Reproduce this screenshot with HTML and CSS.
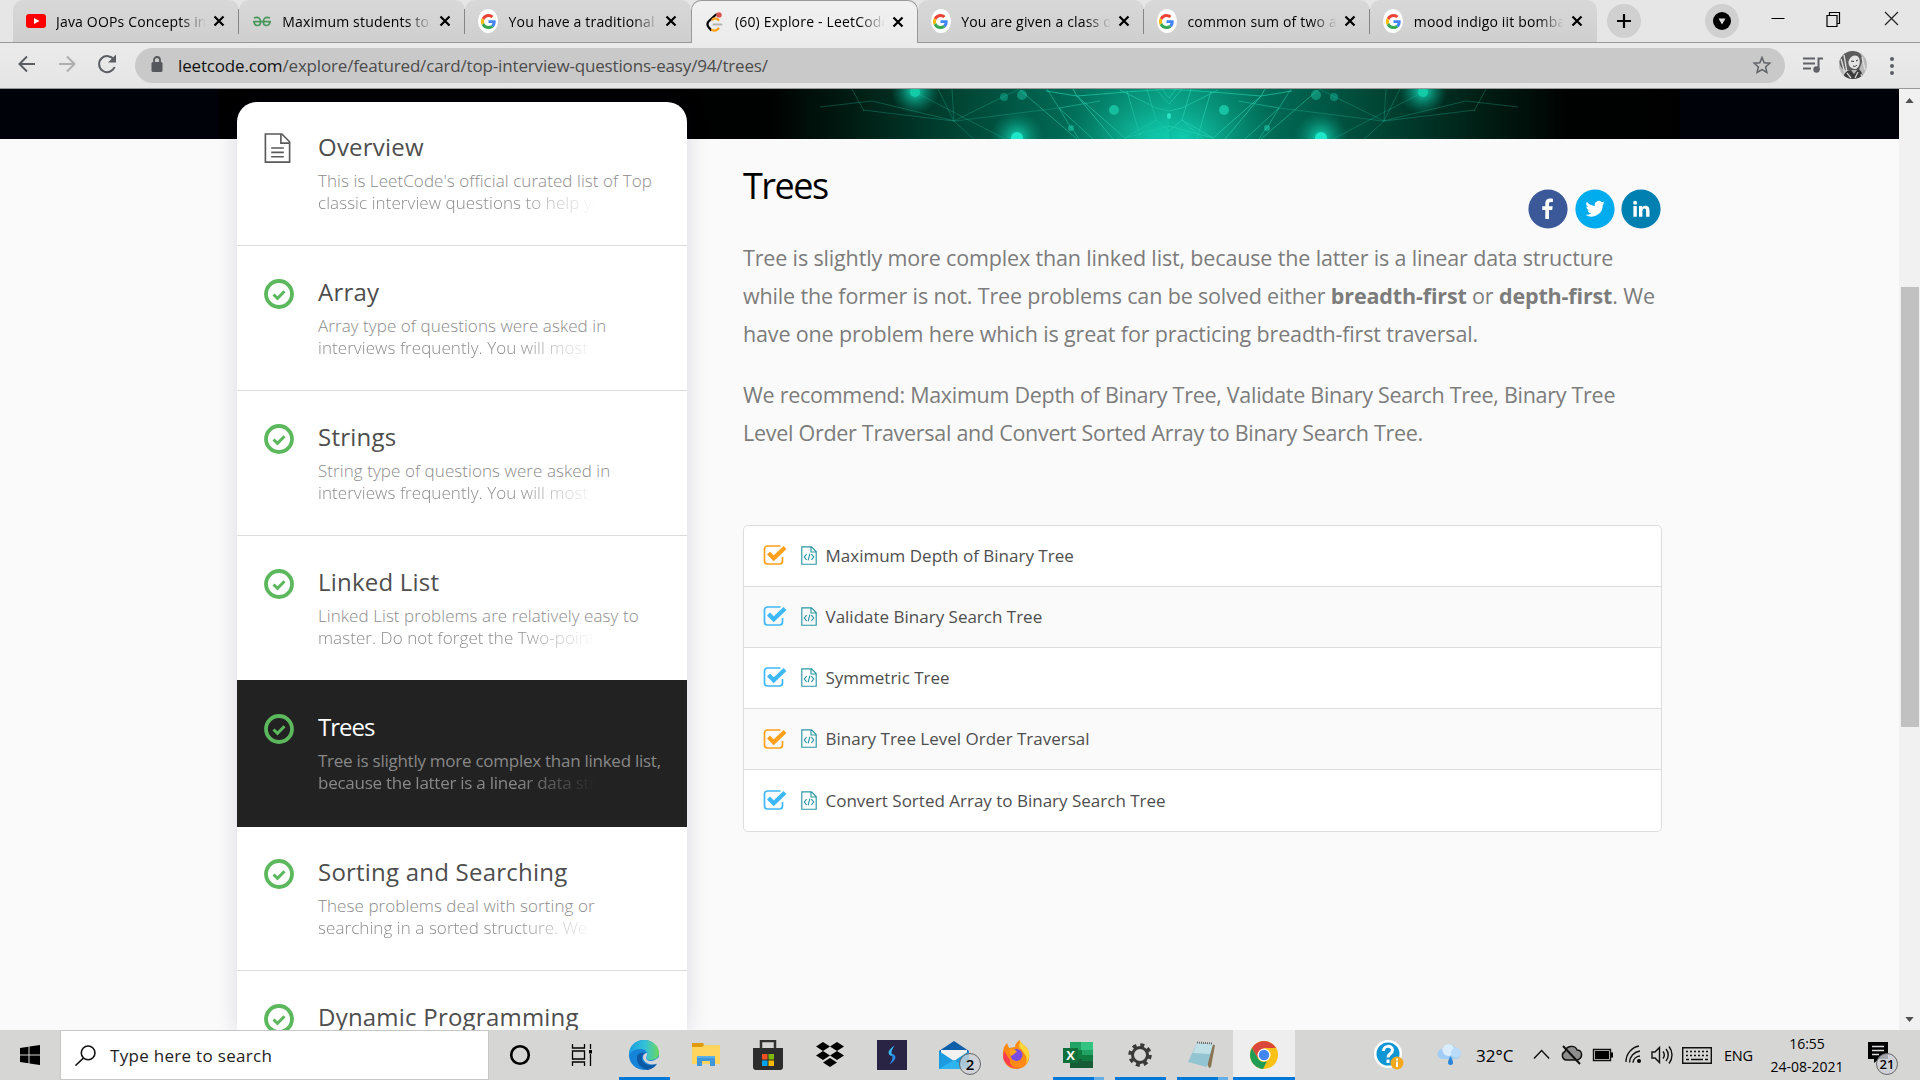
FILE: index.html
```html
<!DOCTYPE html>
<html lang="en">
<head>
<meta charset="utf-8">
<title>(60) Explore - LeetCode</title>
<link rel="stylesheet" href="styles.css">
</head>
<body>
<svg class="defs" width="0" height="0">
  <defs>
    <symbol id="google" viewBox="0 0 48 48"><path fill="#ea4335" d="M24 9.5c3.5 0 6.700 1.200 9.200 3.600l6.800-6.800C35.900 2.400 30.500 0 24 0 14.600 0 6.500 5.400 2.600 13.200l8 6.200C12.400 13.700 17.700 9.500 24 9.500z"/><path fill="#4285f4" d="M47 24.500c0-1.600-.2-3.100-.4-4.500H24v9h12.900c-.6 3-2.200 5.500-4.700 7.200l7.700 6C44.400 38 47 31.800 47 24.500z"/><path fill="#fbbc05" d="M10.500 28.600a14.500 14.500 0 0 1 0-9.200l-8-6.200a24 24 0 0 0 0 21.600z"/><path fill="#34a853" d="M24 48c6.500 0 11.900-2.100 15.900-5.800l-7.700-6c-2.200 1.500-4.900 2.300-8.200 2.300-6.300 0-11.600-4.200-13.500-9.900l-8 6.200C6.500 42.600 14.600 48 24 48z"/></symbol>
    <symbol id="x" viewBox="0 0 12 12"><path d="M1.500 1.500l9 9M10.500 1.500l-9 9" stroke="#000" stroke-width="2.200"/></symbol>
    <symbol id="done" viewBox="0 0 30 30"><circle cx="15" cy="15" r="13" fill="none" stroke="#5cb85c" stroke-width="3.800"/><path d="M9.500 15.500l4 3.800 7-7" fill="none" stroke="#5cb85c" stroke-width="3"/></symbol>
    <symbol id="tick" viewBox="0 0 24 22"><path d="M17.500 2H4.500A3 3 0 0 0 1.500 5v12a3 3 0 0 0 3 3h12a3 3 0 0 0 3-3v-4" fill="none" stroke="currentColor" stroke-width="1.700"/><path d="M5.500 9l5.200 5.200L22 3.400" fill="none" stroke="currentColor" stroke-width="4.200"/></symbol>
    <symbol id="code" viewBox="0 0 16 19"><path d="M.8 .8h9.700l4.700 4.700v12.700H.8zM10 .8V6h5.200M5.600 8.200L3.300 11l2.300 2.800M10.400 8.200l2.300 2.800-2.300 2.800M8.900 7.700l-1.800 6.600" fill="none" stroke="#2a98a4" stroke-width="1.150"/></symbol>
  </defs>
</svg>

<header class="browser">
  <div class="tabs">
    <div class="tab"><svg class="fav" viewBox="0 0 20 20"><rect y="3" width="20" height="14" rx="3" fill="#f00"/><path d="M8 7l5.500 3L8 13z" fill="#fff"/></svg><span class="tt">Java OOPs Concepts in Java</span><svg class="cl"><use href="#x"/></svg></div>
    <div class="tab"><svg class="fav" viewBox="0 0 20 20"><g fill="none" stroke="#2f8d46" stroke-width="1.700" opacity=".85"><path d="M2 7c5-2 7 1 6.500 5-.5 3.500-6 3.500-6.500-1M18 7c-5-2-7 1-6.500 5 .5 3.500 6 3.500 6.500-1M1 10.700h18"/></g></svg><span class="tt">Maximum students to pass</span><svg class="cl"><use href="#x"/></svg></div>
    <div class="tab last-inactive"><span class="fav g"><svg><use href="#google"/></svg></span><span class="tt">You have a traditional car</span><svg class="cl"><use href="#x"/></svg></div>
    <div class="tab active"><svg class="fav" viewBox="0 0 20 20"><g fill="none" stroke-linecap="round"><path d="M12 2.500L5 9c-2 2-2 4-.5 6l2.500 3" stroke="#000" stroke-width="2.200"/><path d="M8.500 7.500c2-1.500 4-1.500 6 .5M8 18c2.500 1.200 4.500.8 6.500-1.500" stroke="#ffa116" stroke-width="2.200"/><path d="M9.500 12.500h8" stroke="#b3b3b3" stroke-width="2"/></g><circle cx="15" cy="2.900" r="2.700" fill="#d9504c"/></svg><span class="tt">(60) Explore - LeetCode</span><svg class="cl"><use href="#x"/></svg></div>
    <div class="tab"><span class="fav g"><svg><use href="#google"/></svg></span><span class="tt">You are given a class of N</span><svg class="cl"><use href="#x"/></svg></div>
    <div class="tab"><span class="fav g"><svg><use href="#google"/></svg></span><span class="tt">common sum of two arrays</span><svg class="cl"><use href="#x"/></svg></div>
    <div class="tab end"><span class="fav g"><svg><use href="#google"/></svg></span><span class="tt">mood indigo iit bombay</span><svg class="cl"><use href="#x"/></svg></div>
    <svg class="plus" viewBox="0 0 34 34"><circle cx="17" cy="17" r="17" fill="#d0d0d0"/><path d="M17 10v14M10 17h14" stroke="#000" stroke-width="2.200"/></svg>
    <span class="grow"></span>
    <svg class="drop" viewBox="0 0 34 34"><circle cx="17" cy="17" r="17" fill="#d0d0d0"/><circle cx="17" cy="17" r="9" fill="#000"/><path d="M13.500 14.500h7L17 20.500z" fill="#ddd"/></svg>
    <svg class="win" viewBox="0 0 140 20"><path d="M0.500 10.500h13" stroke="#000"/><path d="M57 7.500h9v11h-10v-11zM58.500 7V4.500h10v11H66" fill="none" stroke="#000" stroke-width="1.200"/><path d="M114 4l13 13M127 4l-13 13" stroke="#222" stroke-width="1.200"/></svg>
  </div>
  <div class="bar">
    <svg class="nav" viewBox="0 0 110 30"><g fill="none" stroke="#5a5e63" stroke-width="2"><path d="M17 15H2M9 7.500L1.500 15 9 22.500"/><path d="M41 15h15M49 7.500l7.500 7.500-7.500 7.500" stroke="#aeaeae"/><path d="M96 11a8 8 0 1 0 .6 7"/></g><path d="M98 5.500v8h-8z" fill="#5a5e63"/></svg>
    <div class="omni">
      <svg class="lock" viewBox="0 0 12 18"><path d="M3 8V5a3 3 0 0 1 6 0v3" fill="none" stroke="#54575c" stroke-width="1.800"/><rect x=".5" y="7" width="11" height="10" rx="1.500" fill="#54575c"/></svg>
      <span class="url"><b>leetcode.com</b>/explore/featured/card/top-interview-questions-easy/94/trees/</span>
      <svg class="star" viewBox="0 0 20 20"><path d="M10 2.500l2.200 5.200 5.600.5-4.200 3.700 1.300 5.500-4.900-2.900-4.900 2.900 1.300-5.500L2.200 8.200l5.600-.5z" fill="none" stroke="#5f6368" stroke-width="1.500"/></svg>
    </div>
    <svg class="music" viewBox="0 0 20 18"><path d="M0 2.500h12M0 7.500h12M0 12.500h8M15.500 14V2.500H20" fill="none" stroke="#5f6368" stroke-width="2"/><circle cx="13.500" cy="13.500" r="3.200" fill="#5f6368"/></svg>
    <svg class="avatar" viewBox="0 0 28 28"><defs><clipPath id="round"><circle cx="14" cy="14" r="14"/></clipPath></defs><g clip-path="url(#round)"><path d="M0 0h28v28H0z" fill="#b9b9b9"/><path d="M0 6c3-5 8-7 14-6 7 0 10 5 9 11l-3 8H5C1 16 0 11 0 6z" fill="#5c5c5c"/><path d="M10 9c2-5 8-6 10-2s0 11-4 11-8-4-6-9z" fill="#e4e4e4"/><path d="M2 8l4 14M5 4l3 18M23 6l3 13" stroke="#ddd" stroke-width="1.400"/><path d="M12 10l3 .5M17 10l2-1M14 15c2 1 3 0 4-1" stroke="#333" fill="none"/><path d="M4 28c1-6 4-9 8-9l3 4 4-5c4 2 5 6 5 10z" fill="#3d3d3d"/><path d="M8 22l4 5M19 21l-3 6M22 23l1 4" stroke="#d5d5d5" stroke-width="1.300"/></g></svg>
    <svg class="dots" viewBox="0 0 6 20"><circle cx="3" cy="3" r="2" fill="#5a5e63"/><circle cx="3" cy="10" r="2" fill="#5a5e63"/><circle cx="3" cy="17" r="2" fill="#5a5e63"/></svg>
  </div>
</header>

<div class="view">
  <div class="page">
    <svg class="banner" viewBox="0 0 1899 50" preserveAspectRatio="none">
      <defs>
        <linearGradient id="bg"><stop offset="0" stop-color="#000"/><stop offset=".22" stop-color="#000201"/><stop offset=".38" stop-color="#001d13"/><stop offset=".6" stop-color="#004736"/><stop offset=".8" stop-color="#006a55"/><stop offset="1" stop-color="#08a489"/></linearGradient>
        <radialGradient id="glow"><stop offset="0" stop-color="#12d8ba"/><stop offset=".25" stop-color="#10c5a8" stop-opacity=".75"/><stop offset="1" stop-color="#0a8a70" stop-opacity="0"/></radialGradient>
        <g id="half">
          <rect x="660" width="509" height="50" fill="url(#bg)"/>
          <ellipse cx="1155" cy="48" rx="95" ry="56" fill="url(#glow)" opacity=".8"/>
          <circle cx="915" cy="2" r="24" fill="url(#glow)"/><circle cx="1017" cy="49" r="27" fill="url(#glow)"/>
          <circle cx="915" cy="3" r="5" fill="#14cba8"/><circle cx="1017" cy="49" r="6" fill="#1ee6c8"/>
          <g fill="#12a488"><circle cx="1004" cy="8" r="4" opacity=".6"/><circle cx="1022" cy="6" r="5" opacity=".7"/><circle cx="1114" cy="21" r="5" fill="#17c3a2"/><circle cx="1071" cy="39" r="3"/></g>
          <g fill="none" stroke="#23cfae" stroke-width="1"><path d="M820 18l52-6 83 20 104-13M863 21l91 11M954 32l-2-32M954 32L938 0M954 32l65-32M954 32l24 22M852 0l12 22M915 3l90 47" opacity=".27"/><path d="M1020 1l57 49M1047 0l12 19 34 31M1059 19l41-7M1071 38l8 12M1059 19l12 20" opacity=".5"/><path d="M1046 2l31 5 49-4 43-3M1077 7L1073 0M1077 7l48 42M1077 7l36 43M1125 49l31-18 13 11M1127 2l14 48M1147 0l9 31M1120 1l36 18 13 3M1156 0l13 15M1162 0l7 9M1125 49l44-12M1135 50l21-19" opacity=".68"/></g>
        </g>
      </defs>
      <rect width="1899" height="50" fill="#000209"/><rect x="219" width="1461" height="50" fill="#000"/>
      <use href="#half"/><use href="#half" transform="translate(2338 0) scale(-1 1)"/><ellipse cx="1169" cy="27" rx="2" ry="3" fill="#2ce0c2"/>
    </svg>
    <div class="cols">
      <aside class="side">
        <div class="item first"><svg class="doc" viewBox="0 0 27 32"><path d="M1 1h17l8 8v21H1zM17 1v9.500h9M7 15.500h13M7 20h13M7 24.500h13" fill="none" stroke="#5a5a5a" stroke-width="1.700"/></svg><div><h3>Overview</h3><p>This is LeetCode's official curated list of Top</p><p class="fade">classic interview questions to help you</p></div></div>
        <div class="item"><svg class="ok"><use href="#done"/></svg><div><h3>Array</h3><p>Array type of questions were asked in</p><p class="fade">interviews frequently. You will most likely</p></div></div>
        <div class="item"><svg class="ok"><use href="#done"/></svg><div><h3>Strings</h3><p>String type of questions were asked in</p><p class="fade">interviews frequently. You will most likely</p></div></div>
        <div class="item"><svg class="ok"><use href="#done"/></svg><div><h3>Linked List</h3><p>Linked List problems are relatively easy to</p><p class="fade">master. Do not forget the Two-pointer</p></div></div>
        <div class="item current"><svg class="ok"><use href="#done"/></svg><div><h3>Trees</h3><p>Tree is slightly more complex than linked list,</p><p class="fade">because the latter is a linear data structure</p></div></div>
        <div class="item"><svg class="ok"><use href="#done"/></svg><div><h3>Sorting and Searching</h3><p>These problems deal with sorting or</p><p class="fade">searching in a sorted structure. We</p></div></div>
        <div class="item"><svg class="ok"><use href="#done"/></svg><div><h3>Dynamic Programming</h3></div></div>
      </aside>
      <main class="main">
        <div class="head">
          <h1>Trees</h1>
          <div class="social">
            <svg viewBox="0 0 40 40"><circle cx="20" cy="20" r="19.600" fill="#3b5998"/><path d="M17.300 30V21h-3v-3.700h3v-2.800c0-3.300 1.800-5 4.800-5 1.300 0 2.400.1 2.800.2v3.400h-2c-1.500 0-1.900.8-1.900 1.900v2.300h3.700l-.5 3.700h-3.200v9z" fill="#fff"/></svg>
            <svg viewBox="0 0 40 40"><circle cx="20" cy="20" r="19.600" fill="#00aced"/><path d="M29.600 13.900c-.7.300-1.500.5-2.200.6.800-.5 1.400-1.200 1.700-2.100-.8.400-1.600.8-2.500.9a3.900 3.900 0 0 0-6.700 3.600 11 11 0 0 1-8-4.100 3.900 3.900 0 0 0 1.200 5.200c-.6 0-1.200-.2-1.800-.5 0 1.900 1.300 3.500 3.100 3.900-.6.200-1.200.2-1.800.1.500 1.500 1.900 2.700 3.700 2.700a7.900 7.900 0 0 1-5.800 1.600 11.200 11.200 0 0 0 17.200-9.900c.8-.6 1.400-1.200 1.900-2z" fill="#fff"/></svg>
            <svg viewBox="0 0 40 40"><circle cx="20" cy="20" r="19.600" fill="#007fb1"/><path d="M12.400 17h3.400v10.700h-3.400zM14.100 11.700a2 2 0 1 1 0 4 2 2 0 0 1 0-4zM18 17h3.200v1.500c.5-.9 1.600-1.800 3.200-1.800 3.500 0 4.100 2.300 4.100 5.200v5.800h-3.400v-5.200c0-1.300 0-2.900-1.700-2.900s-2 1.400-2 2.800v5.300H18z" fill="#fff"/></svg>
          </div>
        </div>
        <p class="para">Tree is slightly more complex than linked list, because the latter is a linear data structure<br>while the former is not. Tree problems can be solved either <b>breadth-first</b> or <b>depth-first</b>. We<br>have one problem here which is great for practicing breadth-first traversal.</p>
        <p class="para tight">We recommend: Maximum Depth of Binary Tree, Validate Binary Search Tree, Binary Tree<br>Level Order Traversal and Convert Sorted Array to Binary Search Tree.</p>
        <ul class="list">
          <li><svg class="tick o"><use href="#tick"/></svg><svg class="code"><use href="#code"/></svg><span>Maximum Depth of Binary Tree</span></li>
          <li><svg class="tick"><use href="#tick"/></svg><svg class="code"><use href="#code"/></svg><span>Validate Binary Search Tree</span></li>
          <li><svg class="tick"><use href="#tick"/></svg><svg class="code"><use href="#code"/></svg><span>Symmetric Tree</span></li>
          <li><svg class="tick o"><use href="#tick"/></svg><svg class="code"><use href="#code"/></svg><span>Binary Tree Level Order Traversal</span></li>
          <li><svg class="tick"><use href="#tick"/></svg><svg class="code"><use href="#code"/></svg><span>Convert Sorted Array to Binary Search Tree</span></li>
        </ul>
      </main>
    </div>
  </div>
  <div class="scroll"><svg viewBox="0 0 10 6"><path d="M0 6l5-6 5 6z" fill="#505050"/></svg><span class="thumb"></span><svg viewBox="0 0 10 6"><path d="M0 0l5 6 5-6z" fill="#505050"/></svg></div>
</div>

<footer class="task">
  <svg class="start" viewBox="0 0 20 20"><path d="M0 3l8.500-1.200v7.700H0zM9.500 1.600L20 0v9.500H9.500zM0 10.500h8.500v7.700L0 17zM9.500 10.500H20V20L9.500 18.400z"/></svg>
  <div class="find"><svg viewBox="0 0 20 20"><circle cx="12.500" cy="7.500" r="6.500" fill="none" stroke="#111" stroke-width="1.500"/><path d="M8 12.500L.5 19.500" stroke="#111" stroke-width="1.500"/></svg><span>Type here to search</span></div>
  <div class="apps">
    <span class="app"><svg viewBox="0 0 30 30"><circle cx="15" cy="15" r="8.800" fill="none" stroke="#000" stroke-width="2.600"/></svg></span>
    <span class="app"><svg viewBox="0 0 30 30"><path d="M5.500 4v4h12V4M5.500 26v-4h12v4M5.500 11h12v8h-12zM23.500 4v5M23.500 14v12" fill="none" stroke="#000" stroke-width="1.300"/><path d="M22 10h3v3.500h-3z"/></svg></span>
    <span class="app on"><svg viewBox="0 0 30 30"><defs><linearGradient id="e1" x1="0" x2="1"><stop offset="0" stop-color="#1a9fe0"/><stop offset=".55" stop-color="#35c1d8"/><stop offset="1" stop-color="#6ad95a"/></linearGradient></defs><circle cx="15" cy="15" r="15" fill="#1583d8"/><path d="M0 13C1 5 7 0 15 0c9 0 15 6 15 13 0 5-4 7-8 7-5 0-5-2-4-4 1-3-1-7-6-7-6 0-11 3-12 7z" fill="url(#e1)"/><path d="M8 17c-1 7 5 12 11 13 4-1 7-3 9-6-8 3-16 0-15-7 0-2 2-4 4-4-5-1-9 1-9 4z" fill="#0c59a4"/><path d="M18 13c1 3-3 5 1 7.500 3 1 7 .5 11-3.500v7l-2-.5c-5 2-10 1-13-3-2-3-1-7 3-7.500z" fill="#d6d6d6"/></svg></span>
    <span class="app"><svg viewBox="0 0 30 30"><path d="M1 3h11l2 3v5H1z" fill="#e09a10"/><path d="M1 7h10l2-2h16v19H1z" fill="#ffd45f"/><path d="M6 26V16h18v10h-5v-5h-8v5z" fill="#3f96d8"/><path d="M6 16h18v2H6z" fill="#5bb0e8"/></svg></span>
    <span class="app"><svg viewBox="0 0 30 30"><path d="M8 9V1h14v8" fill="none" stroke="#333" stroke-width="2.500"/><path d="M0 8h30v19a3 3 0 0 1-3 3H3a3 3 0 0 1-3-3z" fill="#2d2d2d"/><path d="M9 14h5.500v5.500H9z" fill="#f25022"/><path d="M15.500 14H21v5.500h-5.500z" fill="#7fba00"/><path d="M9 20.500h5.500V26H9z" fill="#00a4ef"/><path d="M15.500 20.500H21V26h-5.500z" fill="#ffb900"/></svg></span>
    <span class="app"><svg viewBox="0 0 30 30"><path d="M8 2l7 4.500L8 11 1 6.500zM22 2l7 4.500-7 4.500-7-4.500zM8 11l7 4.500L8 20l-7-4.500zM22 11l7 4.500-7 4.500-7-4.500zM15 18l7 4.500-7 4.500-7-4.500z"/></svg></span>
    <span class="app"><svg viewBox="0 0 30 30"><path d="M0 0h30v30H0z" fill="#292443"/><path d="M17.500 5.500c-6 4-8 8-3.500 10.500l2-1c-3-2-1-5 1.500-9.500z" fill="#36b5f0"/><path d="M12.500 24.500c6-4 8-8 3.500-10.500l-2 1c3 2 1 5-1.500 9.500z" fill="#2b8be8"/></svg></span>
    <span class="app"><svg viewBox="0 0 30 30"><path d="M0 11L15 1l15 10v4H0z" fill="#0f5ea8"/><path d="M2 10h26v10H2z" fill="#f2f2f2"/><path d="M0 11l15 10 15-10v18H0z" fill="#1d9be0"/><path d="M0 29l15-9 15 9z" fill="#30b4f0"/></svg><i class="badge">2</i></span>
    <span class="app"><svg viewBox="0 0 30 30"><path d="M2 12C2 8 4 5 6 3l2 5 6-1c0-3 2-5 5-7 0 4 6 5 8 10 4 10-2 19-12 19C7 29 1 22 2 12z" fill="#ff8a16"/><path d="M17 4c1 5 8 6 8 12M19 0c0 4 7 5 9 12 1 5-1 10-3 12 2-7-1-14-7-16z" fill="#ffd53a"/><path d="M2 17c2 9 10 12 17 11-8 0-11-4-10-8L3 11z" fill="#ff3b50"/><circle cx="15.500" cy="15" r="6" fill="#7a4be0"/><path d="M8 10c3-2 6-1 8 2-3 1-3 3-6 4z" fill="#ffa51c"/></svg></span>
    <span class="app on more"><svg viewBox="0 0 30 30"><path d="M7 2h23v26H7z" fill="#21a366"/><path d="M18 2h12v8H18z" fill="#33c481"/><path d="M7 10h12v9H7z" fill="#107c41"/><path d="M7 19h23v9H7z" fill="#185c37"/><path d="M19 15h11v6H19z" fill="#107c41"/><path d="M0 8h15v15H0z" fill="#0f703b"/></svg><i class="xl">X</i></span>
    <span class="app on"><svg viewBox="0 0 30 30"><circle cx="15" cy="15" r="7.500" fill="none" stroke="#3a3a3a" stroke-width="3"/><circle cx="15" cy="15" r="10" fill="none" stroke="#3a3a3a" stroke-width="3.500" stroke-dasharray="4 3.850"/></svg></span>
    <span class="app on more"><svg viewBox="0 0 30 30"><path d="M11 3l17 2-4 22-2 1z" fill="#8a7550"/><path d="M10 3l16 1-6 23-19-5z" fill="#93c4d2"/><path d="M10 3l16 1-3 10-17-1z" fill="#bfe0e6"/><path d="M10 2.500l16 1" stroke="#666" stroke-width="2" stroke-dasharray="1 1"/></svg></span>
    <span class="app on focus"><svg viewBox="0 0 30 30"><circle cx="15" cy="15" r="14" fill="#fbc116"/><path d="M2.900 8A14 14 0 0 1 27.100 8H15l-6 10.500z" fill="#d9483b"/><path d="M2.900 8l6 10.500c2 3.500 6 4 9 3L14 29A14 14 0 0 1 2.900 8z" fill="#1f9d55"/><circle cx="15" cy="15" r="6.500" fill="#fff"/><circle cx="15" cy="15" r="5.200" fill="#4285f4"/></svg></span>
  </div>
  <span class="grow"></span>
  <div class="tray">
    <svg class="help" viewBox="0 0 30 32"><circle cx="14" cy="15" r="14" fill="#fff"/><circle cx="14" cy="15" r="11.500" fill="#0f96d4"/><path d="M9.500 12c0-6 9-6 9-1 0 4-4.500 3.500-4.500 7.500M14 20.500v3.500" fill="none" stroke="#fff" stroke-width="3"/><circle cx="23" cy="24" r="6.500" fill="#f5a81c"/><path d="M23 22.500V28M23 19.500v2" stroke="#fff" stroke-width="2"/></svg>
    <svg class="cloud" viewBox="0 0 26 24"><path d="M5.500 16a5 5 0 0 1 0-10A7 7 0 0 1 18 4.500a6 6 0 0 1 2 11.500z" fill="#9fcdf6"/><circle cx="11.500" cy="7" r="6" fill="#d9edfd"/><circle cx="19" cy="10" r="5" fill="#b9dcfa"/><path d="M13.500 13c1.500 3 2.500 4.500 2.500 6.500a2.500 2.500 0 0 1-5 0c0-2 1-3.500 2.500-6.500z" fill="#2b86d9"/></svg>
    <span class="temp">32°C</span>
    <svg class="ico" viewBox="1530 0 190 30"><g fill="none" stroke="#111" stroke-width="1.400"><path d="M1534 18.500l7.600-8 7.600 8"/><path d="M1566 20a4.500 4.500 0 0 1-1-8.500c1-6 10-7 12-1.500 5 0 6 6 2.500 9l-2 1z" fill="#8e8e8e"/><path d="M1563 6l17 18" stroke-width="2"/><path d="M1593.500 9.500h17v11h-17z"/><path d="M1626 22a16 16 0 0 1 13-16M1629.500 22.500a12 12 0 0 1 10.500-11.500M1633 22.700a7.500 7.500 0 0 1 7-6.700"/><path d="M1652 12h3l4.500-4.500v15L1655 18h-3zM1663 11.500c1.500 2 1.500 5 0 7M1666 9c3 3.500 3 8.500 0 12M1669 6.500c4 5 4 12 0 17"/><path d="M1682.700 7.700h28.600v15.600h-28.600z"/><path d="M1686 11.500h22M1686 15.500h22" stroke-dasharray="2 2"/><path d="M1686 19.500h3M1691 19.500h12M1705 19.500h3"/></g><path d="M1595 11h14v8h-14zM1611 12.500h2v5h-2z"/><circle cx="1639" cy="21" r="2"/></svg>
    <span class="eng">ENG</span>
    <span class="clock"><span>16:55</span><span>24-08-2021</span></span>
    <span class="note"><svg viewBox="0 0 20 22"><path d="M0 0h20v17h-9l-5 4v-4H0z"/><path d="M4 4.500h12M4 8.500h12M4 12.500h7" stroke="#ddd" stroke-width="1.500"/></svg><i class="badge">21</i></span>
  </div>
</footer>
</body>
</html>
```
FILE: styles.css
```css
* { box-sizing: border-box; margin: 0; padding: 0; }
body { width: 1920px; height: 1080px; overflow: hidden; display: flex; flex-direction: column; font-family: "Open Sans", "Noto Sans", sans-serif; background: #fafafa; color: #000; }
svg { display: block; flex: none; }
i { font-style: normal; }
.defs { position: absolute; }
.grow { flex: 1; }

/* browser frame */
.browser { height: 89px; flex: none; background: #e6e6e6; }
.tabs { display: flex; height: 43px; padding-left: 12.500px; border-bottom: 1px solid #999; }
.tab { width: 226.300px; height: 42px; padding: 0 14px 0 13px; display: flex; align-items: center; border-radius: 10px 10px 0 0; background: linear-gradient(#d8d8d8, #cfcfcf); position: relative; flex: none; }
.tab::after { content: ""; position: absolute; right: 0; top: 9px; width: 1px; height: 25px; background: #858585; }
.tab.active { background: linear-gradient(#f1f1f1, #ebebeb); border: 1px solid #999; border-bottom: 0; height: 43px; padding: 0 13px 1px 12px; }
.tab.active::after, .last-inactive::after, .tab.end::after { display: none; }
.fav { width: 20px; height: 20px; flex: none; }
.fav.g { width: 20px; height: 24px; border-radius: 50%; background: #fff; display: flex; align-items: center; justify-content: center; }
.fav.g svg { width: 15px; height: 17px; }
.tt { flex: 1; margin-left: 10.500px; margin-right: 8px; overflow: hidden; white-space: nowrap; font-size: 14px; letter-spacing: .18px; -webkit-mask-image: linear-gradient(90deg, #000 124px, transparent 150px); mask-image: linear-gradient(90deg, #000 124px, transparent 150px); }
.url b { font-weight: 400; }
.cl { width: 12px; height: 12px; }
.plus { width: 34px; height: 34px; margin: 4px 0 0 10px; }
.drop { width: 34px; height: 34px; margin: 4px 32px 0 0; }
.win { width: 140px; height: 20px; margin: 8px 9px 0 0; }
.bar { height: 46px; display: flex; align-items: center; background: linear-gradient(#ebebeb, #e5e5e5); border-bottom: 1px solid #999; padding-right: 24px; }
.nav { width: 110px; height: 30px; margin: -3px 7px 0 18px; }
.omni { width: 1650px; height: 35px; margin-top: -1px; border-radius: 18px; background: #c9c9c9; display: flex; align-items: center; padding: 0 13px 0 16px; }
.lock { width: 12px; height: 18px; margin-top: -2px; }
.url { flex: 1; padding-left: 15px; font-size: 17px; letter-spacing: -.16px; color: #4c4c4c; }
.url b { color: #111; }
.star { width: 20px; height: 20px; }
.music { width: 20px; height: 18px; margin: -2px 0 0 18px; }
.avatar { width: 28px; height: 28px; margin: -1px 0 0 16px; }
.dots { width: 6px; height: 20px; margin-left: 22px; }

/* page */
.view { height: 941px; flex: none; display: flex; overflow: hidden; }
.page { width: 1899px; }
.banner { width: 1899px; height: 50px; }
.cols { display: flex; margin-top: -37px; position: relative; padding-left: 237px; }
.side { width: 450px; background: #fff; border-radius: 20px 20px 0 0; box-shadow: 0 0 22px rgba(30, 30, 90, .14); height: 930px; }
.item { height: 145px; border-bottom: 1px solid #dcdcdc; display: flex; padding: 33px 0 0 26.500px; }
.item.first { height: 144px; padding-top: 32px; }
.ok { width: 30px; height: 30px; margin-right: 24.500px; }
.doc { width: 27px; height: 31px; margin: -1px 27px 0 .5px; }
.item h3 { font-size: 24px; font-weight: 400; line-height: 30px; letter-spacing: .22px; color: #4e4e4e; margin: -2px 0 8px; white-space: nowrap; }
.item p { font-size: 17px; line-height: 22px; font-weight: 300; letter-spacing: .07px; color: #8c8c8c; white-space: nowrap; width: 350px; }
.item .fade { -webkit-mask-image: linear-gradient(90deg, #000 200px, transparent 278px); mask-image: linear-gradient(90deg, #000 200px, transparent 278px); }
.item.current { background: #222; border-color: #222; box-shadow: 0 -1px #222, 0 1px #222; }
.item.current h3 { color: #fff; font-weight: 500; letter-spacing: -1px; }
.item.current p { font-weight: 400; letter-spacing: -.26px; color: #888; }
.main { width: 919px; margin-left: 56px; padding-top: 52px; }
.head { height: 85px; display: flex; justify-content: space-between; padding-right: 1px; }
h1 { font-size: 36px; font-weight: 500; letter-spacing: -1.500px; line-height: 64px; }
.social { display: flex; gap: 6.500px; padding-top: 35px; }
.social svg { width: 40px; height: 40px; }
.para { font-size: 21.500px; line-height: 38px; letter-spacing: -.15px; color: #7c7c7c; margin-bottom: 23px; white-space: nowrap; }
.para.tight { letter-spacing: -.28px; }
.list { list-style: none; width: 919px; border: 1px solid #ddd; border-radius: 5px; background: #fff; margin-top: 72.500px; overflow: hidden; }
.list li { height: 61.200px; border-bottom: 1px solid #ddd; display: flex; align-items: center; padding: 0 0 1px 19px; font-size: 17px; color: #4e4e4e; }
.list li:last-child { border-bottom: 0; }
.list li:nth-child(even) { background: #fafafa; }
.tick { width: 24px; height: 22px; color: #3db8f9; }
.tick.o { color: #ffa01c; }
.code { width: 16px; height: 19px; margin: 0 8.500px 0 14px; }
.scroll { width: 21px; background: #f1f1f1; display: flex; flex-direction: column; align-items: center; justify-content: space-between; padding: 9px 0 8px; }
.scroll svg { width: 9px; height: 5px; }
.thumb { width: 18px; height: 440px; background: #c1c1c1; margin-top: -107px; }

/* taskbar */
.task { height: 50px; flex: none; background: #d6d6d5; display: flex; align-items: center; padding-left: 20px; }
.start { width: 20px; height: 24px; }
.find { margin-left: 20px; width: 429px; height: 50px; background: #fff; border: 1px solid #c6c6c6; display: flex; align-items: center; padding-left: 14px; font-size: 17px; letter-spacing: .3px; color: #222; }
.find svg { width: 21px; height: 21px; margin-right: 14px; }
.apps { display: flex; height: 50px; }
.app { width: 62px; display: flex; align-items: center; justify-content: center; position: relative; }
.app svg { width: 30px; height: 30px; }
.on::after { content: ""; position: absolute; left: 6px; right: 5px; bottom: 0; height: 3px; background: #0078d7; }
.more::after { background: linear-gradient(90deg, #0078d7 41px, #66aee6 41px); }
.focus { background: #eee; }
.focus::after { left: 0; right: 0; }
.badge { position: absolute; width: 22px; height: 22px; border: 1px solid #666; border-radius: 50%; background: rgba(205, 210, 215, .8); font-size: 15px; line-height: 20px; text-align: center; font-weight: 600; }
.app .badge { left: 36px; top: 23px; }
.xl { position: absolute; left: 16px; top: 16px; width: 15px; font-size: 13px; line-height: 18px; font-weight: 700; color: #fff; text-align: center; }
.tray { display: flex; align-items: center; height: 50px; width: 546px; }
.tray > * { flex: none; }
.help { width: 30px; height: 32px; }
.cloud { width: 26px; height: 24px; margin-left: 33px; }
.temp { font-size: 17px; width: 67px; padding-left: 13px; }
.ico { width: 190px; height: 30px; }
.eng { font-size: 14.500px; letter-spacing: -.2px; width: 31px; margin-left: 4px; }
.clock { display: flex; flex-direction: column; align-items: center; font-size: 14px; line-height: 23.500px; width: 104px; }
.note { position: relative; width: 20px; margin-left: 9px; }
.note svg { width: 20px; height: 22px; margin-top: -4px; }
.note .badge { left: 8px; top: 7px; font-size: 13px; }
```
